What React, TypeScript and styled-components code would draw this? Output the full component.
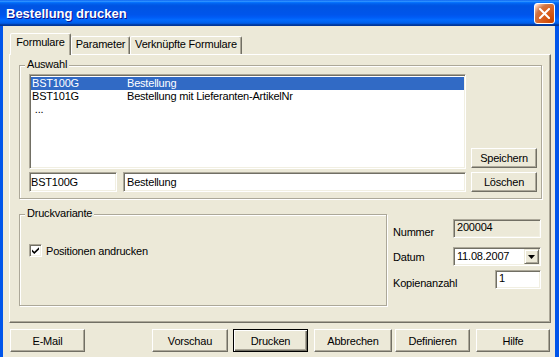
import React from "react";
import styled, { createGlobalStyle, css } from "styled-components";

const Global = createGlobalStyle`
  html, body { margin: 0; padding: 0; background: #ECE9D8; }
  body { font-family: "Liberation Sans", Arial, sans-serif; font-size: 11px; color: #000; letter-spacing: -0.2px; }
  * { box-sizing: border-box; }
`;

const Window = styled.div`
  width: 559px;
  height: 357px;
  overflow: hidden;
  display: flex;
  flex-direction: column;
  background: #ECE9D8;
`;

const TitleBar = styled.div`
  height: 26px;
  flex: none;
  display: flex;
  align-items: flex-start;
  justify-content: space-between;
  padding: 0 4px 0 6px;
  background: linear-gradient(
    to bottom,
    #0058ee 0%, #3593ff 4%, #288eff 6%, #127dff 8%, #036ffc 10%, #0262ee 14%,
    #0057e5 20%, #0054e3 24%, #0055eb 56%, #005bf5 66%, #026afe 76%,
    #0062ef 86%, #0052d6 92%, #0040ab 94%, #003092 100%
  );
`;

const Title = styled.span`
  margin-top: 6px;
  font: bold 13px/15px "Liberation Sans", Arial, sans-serif;
  letter-spacing: 0;
  color: #fff;
  text-shadow: 1px 1px #0f1089;
`;

const CloseButton = styled.div`
  width: 21px;
  height: 21px;
  margin-top: 3px;
  border: 1px solid #fff;
  border-radius: 3px;
  background: radial-gradient(circle at 90% 90%, #cc4600 0%, #dc6527 55%, #cd7546 70%, #ffccb2 90%, #fff 100%);
  display: flex;
  align-items: center;
  justify-content: center;
`;

const Frame = styled.div`
  flex: 1;
  display: flex;
  flex-direction: column;
  border-left: 3px solid #0055ea;
  border-right: 4px solid #0055ea;
  padding: 7px 4px 0 6px;
`;

const TabStrip = styled.div`
  display: flex;
  align-items: flex-end;
  height: 21px;
  padding-left: 1px;
  position: relative;
  z-index: 1;
`;

const Tab = styled.div<{ $w: number; $active?: boolean }>`
  width: ${(p) => p.$w}px;
  height: 18px;
  border: 1px solid;
  border-bottom: none;
  border-color: #fff #716f64 transparent #fff;
  border-radius: 2px 2px 0 0;
  box-shadow: inset -1px 0 #aca899;
  background: #ECE9D8;
  text-align: center;
  line-height: 15px;
  white-space: nowrap;
  ${(p) =>
    p.$active &&
    css`
      height: 22px;
      margin-bottom: -1px;
      line-height: 17px;
    `}
`;

const Panel = styled.div`
  height: 269px;
  flex: none;
  border: 1px solid;
  border-color: #fff #716f64 #716f64 #fff;
  box-shadow: inset -1px -1px #aca899;
  padding: 10px 8px 0 9px;
  display: flex;
  flex-direction: column;
`;

const Group = styled.div<{ $w?: number; $h: number }>`
  position: relative;
  ${(p) => (p.$w ? `width: ${p.$w}px; flex: none;` : "")}
  height: ${(p) => p.$h}px;
  border: 1px solid #aca899;
  box-shadow: 1px 1px 0 #fff, inset 1px 1px 0 #fff;
`;

const Legend = styled.span`
  position: absolute;
  top: -8px;
  left: 5px;
  padding: 0 2px;
  line-height: 13px;
  background: #ECE9D8;
`;

const AuswahlBody = styled.div`
  display: grid;
  grid-template-columns: 437px 66px;
  column-gap: 5px;
  padding: 8px 4px 6px 9px;
`;

const LeftCol = styled.div`
  display: flex;
  flex-direction: column;
  gap: 3px;
`;

const sunken = css`
  border: 1px solid;
  border-color: #aca899 #fff #fff #aca899;
  box-shadow: inset 1px 1px #716f64, inset -1px -1px #f1efe2;
`;

const ListBox = styled.div`
  height: 95px;
  ${sunken};
  background: #fff;
  padding: 2px 1px 1px 1px;
`;

const ListRow = styled.div<{ $selected?: boolean }>`
  display: grid;
  grid-template-columns: 95px 1fr;
  height: 13px;
  line-height: 13px;
  padding-left: 1px;
  white-space: pre;
  ${(p) =>
    p.$selected &&
    css`
      background: #316ac5;
      color: #fff;
    `}
`;

const EditRow = styled.div`
  display: flex;
  gap: 6px;
`;

const Edit = styled.div<{ $w: number; $h?: number; $pl?: number; $readonly?: boolean; $top?: boolean }>`
  width: ${(p) => p.$w}px;
  height: ${(p) => p.$h ?? 20}px;
  flex: none;
  ${sunken};
  background: ${(p) => (p.$readonly ? "#ECE9D8" : "#fff")};
  padding: ${(p) => (p.$top ? "1px" : "0")} 2px 0 ${(p) => p.$pl ?? 3}px;
  display: flex;
  align-items: ${(p) => (p.$top ? "flex-start" : "center")};
  line-height: ${(p) => (p.$top ? 12 : 13)}px;
  white-space: nowrap;
  position: relative;
`;

const SideButtons = styled.div`
  display: flex;
  flex-direction: column;
  justify-content: flex-end;
  gap: 4px;
`;

const Button = styled.button<{ $w: number; $h?: number; $ml?: number; $default?: boolean }>`
  width: ${(p) => p.$w}px;
  height: ${(p) => p.$h ?? 23}px;
  flex: none;
  margin-left: ${(p) => p.$ml ?? 0}px;
  padding: 0;
  font: inherit;
  letter-spacing: inherit;
  color: #000;
  background: #ECE9D8;
  border: 1px solid;
  border-color: #fff #716f64 #716f64 #fff;
  box-shadow: inset -1px -1px #aca899;
  text-align: center;
  ${(p) =>
    p.$default &&
    css`
      border-color: #000;
      box-shadow: inset 1px 1px #fff, inset -1px -1px #716f64, inset -2px -2px #aca899;
    `}
`;

const Lower = styled.div`
  display: flex;
  gap: 6px;
  margin-top: 15px;
`;

const CheckRow = styled.div`
  display: flex;
  align-items: center;
  gap: 4px;
  padding: 29px 0 0 9px;
`;

const CheckBox = styled.div`
  width: 13px;
  height: 13px;
  ${sunken};
  background: #fff;
  display: flex;
  align-items: center;
  justify-content: center;
`;

const RightFields = styled.div`
  width: 148px;
  display: flex;
  flex-direction: column;
  padding-top: 5px;
`;

const FieldRow = styled.div<{ $mt?: number }>`
  display: flex;
  justify-content: space-between;
  align-items: flex-start;
  margin-top: ${(p) => p.$mt ?? 0}px;
`;

const FieldLabel = styled.span<{ $off: number }>`
  line-height: 13px;
  padding-top: ${(p) => p.$off}px;
`;

const DropButton = styled.div`
  position: absolute;
  right: 1px;
  top: 1px;
  width: 15px;
  height: 15px;
  border: 1px solid;
  border-color: #ECE9D8 #716f64 #716f64 #ECE9D8;
  box-shadow: inset 1px 1px #fff, inset -1px -1px #aca899;
  background: #ECE9D8;
  display: flex;
  align-items: center;
  justify-content: center;
`;

const ButtonBar = styled.div`
  display: flex;
  margin-top: 6px;
  padding: 0 1px;
`;

export default function App() {
  return (
    <>
      <Global />
      <Window>
        <TitleBar>
          <Title>Bestellung drucken</Title>
          <CloseButton>
            <svg width="11" height="11" viewBox="0 0 11 11">
              <path d="M1 1 L10 10 M10 1 L1 10" stroke="#fff" strokeWidth="2" strokeLinecap="square" />
            </svg>
          </CloseButton>
        </TitleBar>
        <Frame>
          <TabStrip>
            <Tab $w={61} $active>Formulare</Tab>
            <Tab $w={59}>Parameter</Tab>
            <Tab $w={112}>Verknüpfte Formulare</Tab>
          </TabStrip>
          <Panel>
            <Group $h={134}>
              <Legend>Auswahl</Legend>
              <AuswahlBody>
                <LeftCol>
                  <ListBox>
                    <ListRow $selected>
                      <span>BST100G</span>
                      <span>Bestellung</span>
                    </ListRow>
                    <ListRow>
                      <span>BST101G</span>
                      <span>Bestellung mit Lieferanten-ArtikelNr</span>
                    </ListRow>
                    <ListRow>
                      <span>{" ..."}</span>
                      <span />
                    </ListRow>
                  </ListBox>
                  <EditRow>
                    <Edit $w={88} $pl={1}>BST100G</Edit>
                    <Edit $w={343}>Bestellung</Edit>
                  </EditRow>
                </LeftCol>
                <SideButtons>
                  <Button $w={66} $h={20}>Speichern</Button>
                  <Button $w={66} $h={20}>Löschen</Button>
                </SideButtons>
              </AuswahlBody>
            </Group>
            <Lower>
              <Group $w={368} $h={92}>
                <Legend>Druckvariante</Legend>
                <CheckRow>
                  <CheckBox>
                    <svg width="9" height="9" viewBox="0 0 9 9">
                      <path d="M1 3.5 L3.3 5.8 L8 1.2 L8 3.4 L3.3 8 L1 5.7 Z" fill="#000" />
                    </svg>
                  </CheckBox>
                  <span>Positionen andrucken</span>
                </CheckRow>
              </Group>
              <RightFields>
                <FieldRow>
                  <FieldLabel $off={7}>Nummer</FieldLabel>
                  <Edit $w={88} $h={19} $readonly $top>200004</Edit>
                </FieldRow>
                <FieldRow $mt={8}>
                  <FieldLabel $off={4}>Datum</FieldLabel>
                  <Edit $w={88} $h={19}>
                    11.08.2007
                    <DropButton>
                      <svg width="7" height="4" viewBox="0 0 7 4">
                        <path d="M0 0 H7 L3.5 4 Z" fill="#000" />
                      </svg>
                    </DropButton>
                  </Edit>
                </FieldRow>
                <FieldRow $mt={4}>
                  <FieldLabel $off={7}>Kopienanzahl</FieldLabel>
                  <Edit $w={46} $h={19} $top>1</Edit>
                </FieldRow>
              </RightFields>
            </Lower>
          </Panel>
          <ButtonBar>
            <Button $w={75}>E-Mail</Button>
            <Button $w={76} $ml={67}>Vorschau</Button>
            <Button $w={75} $ml={5} $default>Drucken</Button>
            <Button $w={78} $ml={6}>Abbrechen</Button>
            <Button $w={75} $ml={3}>Definieren</Button>
            <Button $w={74} $ml={6}>Hilfe</Button>
          </ButtonBar>
        </Frame>
      </Window>
    </>
  );
}
